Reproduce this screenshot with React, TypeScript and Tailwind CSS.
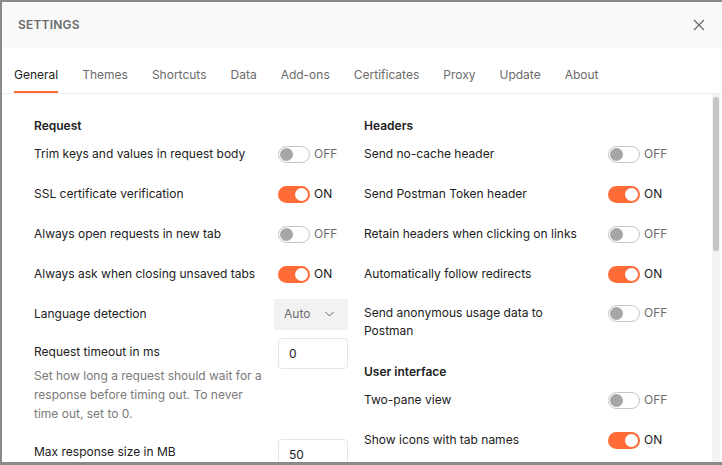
import React from "react";

function Toggle({ on }: { on: boolean }) {
  return (
    <div className="flex items-center h-[18px] shrink-0">
      {on ? (
        <div className="w-[32px] h-[17px] rounded-full bg-[#ff6c37] flex items-center justify-end pr-[2px]">
          <div className="w-[13px] h-[13px] rounded-full bg-white" />
        </div>
      ) : (
        <div className="w-[32px] h-[17px] rounded-full bg-white border border-[#c4c4c4] flex items-center pl-[1px]">
          <div className="w-[13px] h-[13px] rounded-full bg-[#a6a6a6]" />
        </div>
      )}
      <span className={"ml-[4px] text-[12px] leading-[18px] " + (on ? "text-[#212121]" : "text-[#6b6b6b]")}>
        {on ? "ON" : "OFF"}
      </span>
    </div>
  );
}

function ToggleRow({ label, on }: { label: string; on: boolean }) {
  return (
    <div className="flex items-start py-[11px]">
      <div className="w-[230px] shrink-0 leading-[18px] text-[#212121]">{label}</div>
      <div className="ml-[14px] shrink-0">
        <Toggle on={on} />
      </div>
    </div>
  );
}

function Heading({ children, className = "" }: { children: React.ReactNode; className?: string }) {
  return <div className={"font-semibold leading-[16px] text-[#212121] " + className}>{children}</div>;
}

export default function App() {
  const tabs = ["General", "Themes", "Shortcuts", "Data", "Add-ons", "Certificates", "Proxy", "Update", "About"];
  return (
    <div
      className="w-[722px] h-[465px] bg-[#8a8a8a] pl-[2px] pt-[2px] overflow-hidden text-[12px]"
      style={{ fontFamily: "Inter, 'Noto Sans', sans-serif" }}
    >
      <div className="w-[720px] h-[460px] bg-white flex flex-col">
        <div className="h-[46px] bg-[#f9f9f9] flex items-center justify-between pl-[16px] pr-[18px] shrink-0">
          <div className="text-[12px] font-semibold text-[#6b6b6b] tracking-[0.2px]">SETTINGS</div>
          <svg width="12" height="12" viewBox="0 0 12 12" className="mr-[-1px]">
            <path d="M1 1L11 11M11 1L1 11" stroke="#6b6b6b" strokeWidth="1.3" fill="none" />
          </svg>
        </div>
        <div className="h-[46px] border-b border-[#ededed] flex pl-[12px] gap-[24px] shrink-0">
          {tabs.map((t, i) => (
            <div
              key={t}
              className={
                "h-[45px] pt-[17px] leading-[20px] " +
                (i === 0 ? "text-[#212121] border-b-2 border-[#ff6c37]" : "text-[#6b6b6b]")
              }
            >
              {t}
            </div>
          ))}
        </div>
        <div className="flex flex-1 min-h-0 overflow-hidden">
          <div className="w-[330px] pl-[32px] pt-[24px] shrink-0">
            <Heading>Request</Heading>
            <ToggleRow label="Trim keys and values in request body" on={false} />
            <ToggleRow label="SSL certificate verification" on={true} />
            <ToggleRow label="Always open requests in new tab" on={false} />
            <ToggleRow label="Always ask when closing unsaved tabs" on={true} />
            <div className="flex items-center h-[40px]">
              <div className="w-[230px] shrink-0 text-[#212121]">Language detection</div>
              <div className="ml-[10px] shrink-0 w-[74px] h-[31px] bg-[#f2f2f2] flex items-center pl-[10px] pr-[14px] justify-between">
                <span className="text-[#6b6b6b]">Auto</span>
                <svg width="9" height="6" viewBox="0 0 9 6">
                  <path d="M0.5 1L4.5 5L8.5 1" stroke="#6b6b6b" strokeWidth="1" fill="none" />
                </svg>
              </div>
            </div>
            <div className="flex items-start pt-[8px] pb-[12px]">
              <div className="w-[230px] shrink-0">
                <div className="leading-[20px] text-[#212121]">Request timeout in ms</div>
                <div className="mt-[4px] leading-[19px] text-[#7a7a7a]">
                  Set how long a request should wait for a response before timing out. To never time out, set to 0.
                </div>
              </div>
              <div className="ml-[14px] shrink-0 mt-[-4px] w-[70px] h-[31px] border border-[#e6e6e6] rounded-[4px] flex items-center pl-[10px] text-[#212121]">
                0
              </div>
            </div>
            <div className="flex items-start pt-[7px]">
              <div className="w-[230px] shrink-0 leading-[20px] text-[#212121]">Max response size in MB</div>
              <div className="ml-[14px] shrink-0 mt-[-3px] w-[70px] h-[31px] border border-[#e6e6e6] rounded-[4px] flex items-center pl-[10px] text-[#212121]">
                50
              </div>
            </div>
          </div>
          <div className="w-[330px] pl-[32px] pt-[24px] shrink-0">
            <Heading>Headers</Heading>
            <ToggleRow label="Send no-cache header" on={false} />
            <ToggleRow label="Send Postman Token header" on={true} />
            <ToggleRow label="Retain headers when clicking on links" on={false} />
            <ToggleRow label="Automatically follow redirects" on={true} />
            <div className="flex items-start py-[10px]">
              <div className="w-[230px] shrink-0 leading-[18px] text-[#212121]">Send anonymous usage data to Postman</div>
              <div className="ml-[14px] shrink-0">
                <Toggle on={false} />
              </div>
            </div>
            <Heading className="mt-[14px]">User interface</Heading>
            <ToggleRow label="Two-pane view" on={false} />
            <ToggleRow label="Show icons with tab names" on={true} />
          </div>
          <div className="flex-1" />
          <div className="w-[8px] mr-[2px] bg-[#f3f3f3] pt-[3px] flex flex-col shrink-0">
            <div className="mx-[1px] h-[154px] rounded-full bg-[#c4c4c4]" />
          </div>
        </div>
      </div>
    </div>
  );
}
